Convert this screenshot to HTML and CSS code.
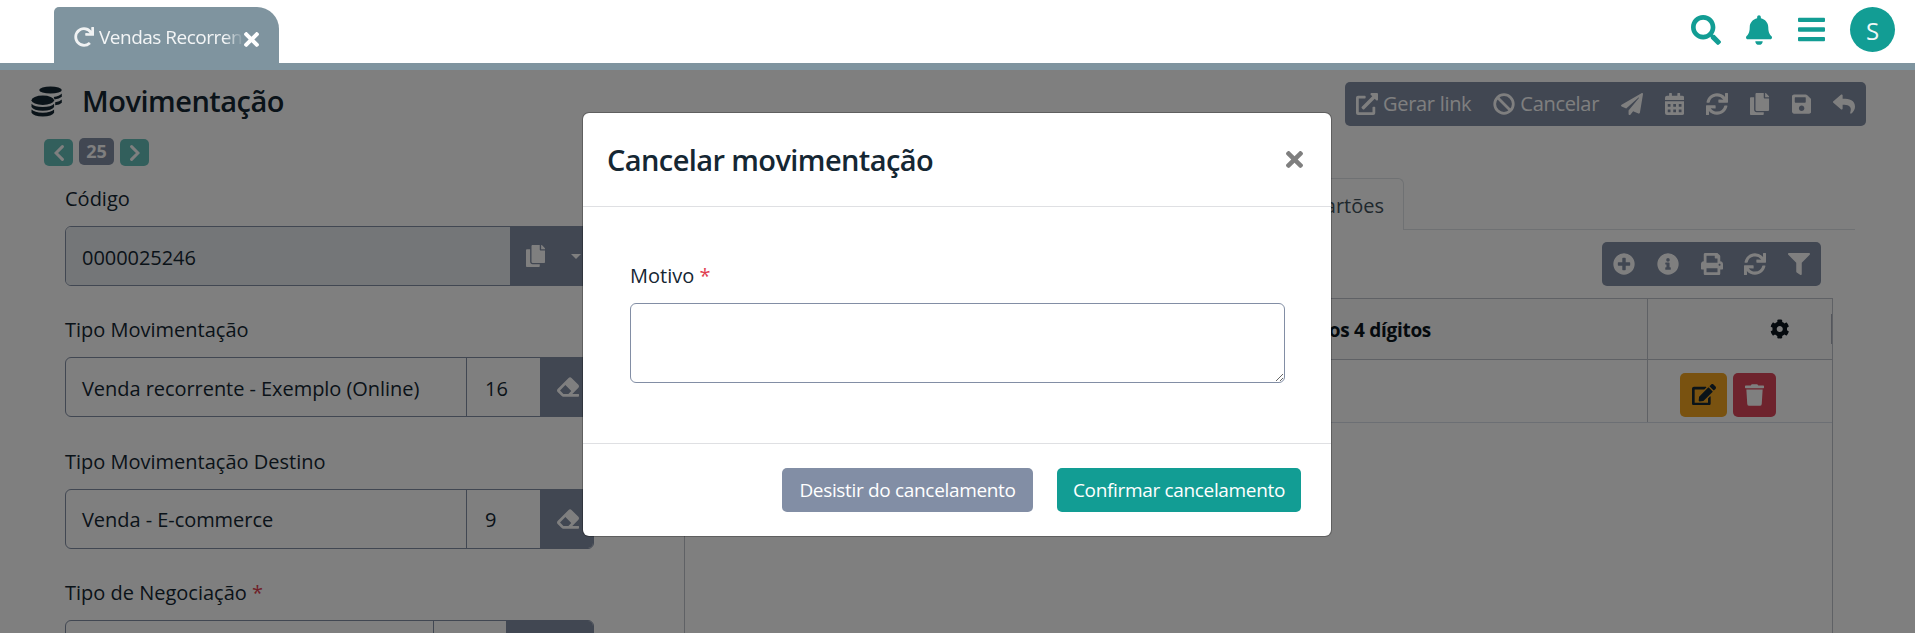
FILE: index.html
```html
<!DOCTYPE html>
<html lang="pt-BR">
<head>
<meta charset="utf-8">
<title>Movimentação</title>
<link rel="stylesheet" href="styles.css">
</head>
<body>
<svg class="sprite" aria-hidden="true">
  <symbol id="search" viewBox="0 0 512 512"><path d="M505 442.7L405.3 343c-4.500-4.500-10.600-7-17-7H372c27.600-35.300 44-79.700 44-128C416 93.100 322.900 0 208 0S0 93.100 0 208s93.100 208 208 208c48.300 0 92.700-16.400 128-44v16.300c0 6.400 2.500 12.500 7 17l99.700 99.700c9.400 9.400 24.600 9.400 33.900 0l28.300-28.300c9.400-9.400 9.400-24.600.1-34zM208 336c-70.700 0-128-57.200-128-128 0-70.700 57.200-128 128-128 70.700 0 128 57.200 128 128 0 70.700-57.200 128-128 128z"/></symbol>
  <symbol id="bell" viewBox="0 0 448 512"><path d="M224 512c35.320 0 63.970-28.650 63.970-64H160.030c0 35.350 28.650 64 63.970 64zm215.390-149.710c-19.320-20.760-55.470-51.990-55.470-154.290 0-77.700-54.480-139.900-127.940-155.160V32c0-17.670-14.320-32-31.980-32s-31.980 14.330-31.980 32v20.840C118.560 68.100 64.080 130.300 64.080 208c0 102.300-36.150 133.530-55.470 154.290-6 6.450-8.660 14.160-8.610 21.710.11 16.400 12.980 32 32.100 32h383.800c19.120 0 32-15.600 32.100-32 .05-7.550-2.610-15.270-8.610-21.710z"/></symbol>
  <symbol id="bars" viewBox="0 0 448 512"><rect y="60" width="448" height="72" rx="16"/><rect y="220" width="448" height="72" rx="16"/><rect y="380" width="448" height="72" rx="16"/></symbol>
  <symbol id="times" viewBox="0 80 352 352"><path d="M242.720 256l100.070-100.070c12.280-12.280 12.280-32.190 0-44.480l-22.240-22.240c-12.280-12.280-32.190-12.280-44.480 0L176 189.280 75.930 89.210c-12.280-12.280-32.190-12.280-44.480 0L9.210 111.450c-12.280 12.280-12.280 32.190 0 44.480L109.280 256 9.210 356.070c-12.280 12.280-12.280 32.190 0 44.480l22.240 22.240c12.280 12.280 32.200 12.280 44.480 0L176 322.720l100.070 100.070c12.280 12.280 32.200 12.280 44.480 0l22.240-22.240c12.280-12.280 12.280-32.190 0-44.480L242.720 256z"/></symbol>
  <symbol id="redo" viewBox="0 0 512 512"><path d="M500.330 0h-47.410a12 12 0 0 0-12 12.570l4 82.760A247.420 247.420 0 0 0 256 8C119.340 8 7.900 119.530 8 256.190 8.100 393.070 119.100 504 256 504a247.100 247.100 0 0 0 166.180-63.910 12 12 0 0 0 .48-17.430l-34-34a12 12 0 0 0-16.380-.55A176 176 0 1 1 402.100 157.800l-101.530-4.870a12 12 0 0 0-12.570 12v47.410a12 12 0 0 0 12 12h200.330a12 12 0 0 0 12-12V12a12 12 0 0 0-12-12z"/></symbol>
  <symbol id="coins" viewBox="0 0 31 31"><ellipse cx="19.500" cy="4" rx="11.300" ry="3.600"/><path d="M30.800 7.500v3.200q-2.300 2.200-7.300 2.700l-.8-2.300q5.600-.7 8.100-3.600zM30.800 13.500v3.200q-2 2-6.600 2.600v-3q4.600-.7 6.600-2.800z"/><ellipse cx="11.800" cy="14.300" rx="11.300" ry="4.700"/><path d="M.5 17.800q3 3.300 11.300 3.300t11.300-3.300v3.200q-2 3.700-11.300 3.700T.5 21zM.5 23.600q3 3.100 11.300 3.100t11.300-3.100v3.100q-2 3.700-11.300 3.700T.5 26.700z"/></symbol>
  <symbol id="left" viewBox="0 0 10 16"><path d="M8.400 1.600L2 8l6.400 6.400" class="stroke"/></symbol>
  <symbol id="right" viewBox="0 0 10 16"><path d="M1.600 1.600L8 8l-6.400 6.400" class="stroke"/></symbol>
  <symbol id="external" viewBox="0 0 512 512"><path d="M432 320h-32a16 16 0 0 0-16 16v112H64V128h144a16 16 0 0 0 16-16V80a16 16 0 0 0-16-16H48a48 48 0 0 0-48 48v352a48 48 0 0 0 48 48h352a48 48 0 0 0 48-48V336a16 16 0 0 0-16-16zM488 0h-128c-21.370 0-32.050 25.910-17 41l35.730 35.730L135 320.370a24 24 0 0 0 0 34L157.670 377a24 24 0 0 0 34 0l243.610-243.680L471 169c15 15 41 4.500 41-17V24a24 24 0 0 0-24-24z"/></symbol>
  <symbol id="ban" viewBox="0 0 512 512"><g fill="none" stroke="currentColor" stroke-width="64"><circle cx="256" cy="256" r="216"/><path d="M105 105l302 302"/></g></symbol>
  <symbol id="plane" viewBox="0 0 512 512"><path d="M476 3.200L12.500 270.600c-18.100 10.400-15.800 35.600 2.200 43.200L121 358.400l287.300-253.200c5.500-4.900 13.300 2.600 8.600 8.300L176 407v80.500c0 23.600 28.500 32.900 42.500 15.800L282 426l124.600 52.200c14.200 6 30.400-2.900 33-18.200l72-432C515 7.800 493.300-6.800 476 3.200z"/></symbol>
  <symbol id="calendar" viewBox="0 0 448 512"><path fill-rule="evenodd" d="M0 160v-48q0-48 48-48h48V12q0-12 12-12h40q12 0 12 12v52h128V12q0-12 12-12h40q12 0 12 12v52h48q48 0 48 48v48zM0 192h448v272q0 48-48 48H48q-48 0-48-48zM64 256v64h64v-64zM192 256v64h64v-64zM320 256v64h64v-64zM64 384v64h64v-64zM192 384v64h64v-64zM320 384v64h64v-64z"/></symbol>
  <symbol id="sync" viewBox="0 0 512 512"><path d="M440.650 12.570l4 82.770A247.160 247.160 0 0 0 255.830 8C134.730 8 33.910 94.920 12.290 209.820A12 12 0 0 0 24.090 224h49.050a12 12 0 0 0 11.670-9.260 175.910 175.910 0 0 1 317-56.940l-101.460-4.860a12 12 0 0 0-12.570 12v47.410a12 12 0 0 0 12 12H500a12 12 0 0 0 12-12V12a12 12 0 0 0-12-12h-47.370a12 12 0 0 0-11.980 12.570zM255.830 432a175.610 175.610 0 0 1-146-77.800l101.800 4.870a12 12 0 0 0 12.570-12v-47.400a12 12 0 0 0-12-12H12a12 12 0 0 0-12 12V500a12 12 0 0 0 12 12h47.350a12 12 0 0 0 12-12.600l-4.150-82.570A247.170 247.170 0 0 0 255.830 504c121.110 0 221.930-86.920 243.550-201.820a12 12 0 0 0-11.800-14.180h-49.050a12 12 0 0 0-11.670 9.260A175.860 175.860 0 0 1 255.830 432z"/></symbol>
  <symbol id="copy" viewBox="0 0 448 512"><path d="M320 448v40c0 13.255-10.745 24-24 24H24c-13.255 0-24-10.745-24-24V120c0-13.255 10.745-24 24-24h72v296c0 30.879 25.121 56 56 56h168zm0-344V0H152c-13.255 0-24 10.745-24 24v368c0 13.255 10.745 24 24 24h272c13.255 0 24-10.745 24-24V128H344c-13.200 0-24-10.800-24-24zm120.971-31.029L375.029 7.029A24 24 0 0 0 358.059 0H352v96h96v-6.059a24 24 0 0 0-7.029-16.970z"/></symbol>
  <symbol id="save" viewBox="0 0 448 512"><path d="M433.941 129.941l-83.882-83.882A48 48 0 0 0 316.118 32H48C21.490 32 0 53.490 0 80v352c0 26.510 21.490 48 48 48h352c26.510 0 48-21.490 48-48V163.882a48 48 0 0 0-14.059-33.941zM224 416c-35.346 0-64-28.654-64-64 0-35.346 28.654-64 64-64s64 28.654 64 64c0 35.346-28.654 64-64 64zm96-304.520V212c0 6.627-5.373 12-12 12H76c-6.627 0-12-5.373-12-12V108c0-6.627 5.373-12 12-12h228.520c3.183 0 6.235 1.264 8.485 3.515l3.480 3.480A11.996 11.996 0 0 1 320 111.480z"/></symbol>
  <symbol id="reply" viewBox="0 0 512 512"><path d="M8.309 189.836L184.313 37.851C199.719 24.546 224 35.347 224 56.015v80.053c160.629 1.839 288 34.032 288 186.258 0 61.441-39.581 122.309-83.333 154.132-13.653 9.931-33.111-2.533-28.077-18.631 45.344-145.012-21.507-183.510-176.590-185.742V360c0 20.700-24.300 31.453-39.687 18.164l-176.004-152c-11.071-9.562-11.086-26.753 0-36.328z"/></symbol>
  <symbol id="plus" viewBox="0 0 512 512"><path fill-rule="evenodd" d="M8 256a248 248 0 1 0 496 0a248 248 0 1 0-496 0zM216 126q0-14 14-14h52q14 0 14 14v90h90q14 0 14 14v52q0 14-14 14h-90v90q0 14-14 14h-52q-14 0-14-14v-90h-90q-14 0-14-14v-52q0-14 14-14h90z"/></symbol>
  <symbol id="info" viewBox="0 0 512 512"><path fill-rule="evenodd" d="M8 256a248 248 0 1 0 496 0a248 248 0 1 0-496 0zM214 160a42 42 0 1 0 84 0a42 42 0 1 0-84 0zM192 232q0-12 12-12h76q12 0 12 12v100h16q12 0 12 12v36q0 12-12 12H204q-12 0-12-12v-36q0-12 12-12h16v-64h-16q-12 0-12-12z"/></symbol>
  <symbol id="print" viewBox="0 0 512 512"><path d="M448 192V77.250c0-8.490-3.370-16.620-9.370-22.630L393.370 9.370c-6-6-14.140-9.370-22.630-9.370H96C78.330 0 64 14.330 64 32v160c-35.350 0-64 28.650-64 64v112c0 8.840 7.160 16 16 16h48v96c0 17.670 14.330 32 32 32h320c17.670 0 32-14.330 32-32v-96h48c8.840 0 16-7.160 16-16V256c0-35.350-28.650-64-64-64zm-64 256H128v-96h256v96zm0-224H128V64h192v48c0 8.840 7.160 16 16 16h48v96zm48 72c-13.250 0-24-10.750-24-24 0-13.260 10.750-24 24-24s24 10.740 24 24c0 13.250-10.750 24-24 24z"/></symbol>
  <symbol id="filter" viewBox="0 0 512 512"><path d="M487.976 0H24.028C2.710 0-8.047 25.866 7.058 40.971L192 225.941V432c0 7.831 3.821 15.170 10.237 19.662l80 55.980C298.020 518.690 320 507.493 320 487.980V225.941l184.947-184.970C520.021 25.896 509.338 0 487.976 0z"/></symbol>
  <symbol id="cog" viewBox="0 0 512 512"><path d="M487.400 315.700l-42.600-24.600c4.300-23.200 4.300-47 0-70.200l42.600-24.600c4.900-2.800 7.100-8.600 5.500-14-11.100-35.600-30-67.800-54.700-94.600-3.800-4.100-10-5.100-14.800-2.300L380.800 110c-17.900-15.400-38.500-27.300-60.800-35.100V25.800c0-5.600-3.900-10.500-9.400-11.700-36.700-8.200-74.300-7.800-109.200 0-5.500 1.200-9.400 6.100-9.400 11.700V75c-22.200 7.900-42.800 19.800-60.800 35.100L88.700 85.500c-4.900-2.800-11-1.900-14.800 2.300-24.700 26.700-43.600 58.900-54.700 94.600-1.700 5.400.6 11.200 5.500 14L67.300 221c-4.300 23.200-4.300 47 0 70.200l-42.600 24.600c-4.900 2.800-7.100 8.600-5.500 14 11.100 35.600 30 67.800 54.700 94.600 3.800 4.100 10 5.100 14.800 2.300l42.600-24.600c17.900 15.400 38.500 27.300 60.800 35.100v49.200c0 5.600 3.900 10.500 9.400 11.700 36.700 8.200 74.300 7.800 109.200 0 5.500-1.200 9.400-6.100 9.400-11.700v-49.200c22.200-7.900 42.800-19.800 60.800-35.100l42.600 24.600c4.900 2.800 11 1.900 14.800-2.300 24.700-26.700 43.600-58.900 54.700-94.600 1.500-5.500-.7-11.300-5.600-14.100zM256 336c-44.100 0-80-35.900-80-80s35.900-80 80-80 80 35.900 80 80-35.900 80-80 80z"/></symbol>
  <symbol id="edit" viewBox="0 0 576 512"><path d="M402.600 83.200l90.200 90.200c3.800 3.800 3.800 10 0 13.800L274.400 405.600l-92.800 10.300c-12.400 1.400-22.900-9.100-21.500-21.500l10.300-92.800L388.800 83.200c3.800-3.800 10-3.800 13.800 0zm162-22.900l-48.800-48.800c-15.200-15.200-39.900-15.200-55.200 0l-35.400 35.400c-3.800 3.800-3.800 10 0 13.800l90.200 90.200c3.800 3.800 10 3.800 13.800 0l35.400-35.400c15.200-15.300 15.200-40 0-55.200zM384 346.200V448H64V128h229.800c3.200 0 6.200-1.300 8.500-3.500l40-40c7.600-7.600 2.200-20.500-8.500-20.500H48C21.500 64 0 85.500 0 112v352c0 26.500 21.500 48 48 48h352c26.500 0 48-21.500 48-48V306.200c0-10.700-12.900-16-20.500-8.500l-40 40c-2.200 2.300-3.500 5.300-3.500 8.500z"/></symbol>
  <symbol id="trash" viewBox="0 0 448 512"><path d="M432 32H312l-9.400-18.700A24 24 0 0 0 281.100 0H166.800a23.720 23.720 0 0 0-21.400 13.300L136 32H16A16 16 0 0 0 0 48v32a16 16 0 0 0 16 16h416a16 16 0 0 0 16-16V48a16 16 0 0 0-16-16zM53.200 467a48 48 0 0 0 47.900 45h245.800a48 48 0 0 0 47.900-45L416 128H32z"/></symbol>
  <symbol id="eraser" viewBox="0 0 512 512"><path d="M497.941 273.941c18.745-18.745 18.745-49.137 0-67.882l-160-160c-18.745-18.745-49.136-18.746-67.883 0l-256 256c-18.745 18.745-18.745 49.137 0 67.882l96 96A48.004 48.004 0 0 0 144 480h356c6.627 0 12-5.373 12-12v-40c0-6.627-5.373-12-12-12H355.883l142.058-142.059zm-302.627-62.627l137.373 137.373L265.373 416H150.628l-80-80 124.686-124.686z"/></symbol>
</svg>

<header class="topbar">
  <div class="apptab">
    <svg class="redo"><use href="#redo"/></svg>
    <span class="apptab-title">Vendas Recorren</span>
    <svg class="apptab-close"><use href="#times"/></svg>
  </div>
  <nav class="topnav">
    <svg class="i-search"><use href="#search"/></svg>
    <svg class="i-bell"><use href="#bell"/></svg>
    <svg class="i-bars"><use href="#bars"/></svg>
    <span class="avatar">S</span>
  </nav>
</header>

<main class="page">
  <section class="form">
    <h1 class="title"><svg class="coins"><use href="#coins"/></svg><span>Movimentação</span></h1>
    <div class="pager">
      <button class="page-btn"><svg><use href="#left"/></svg></button>
      <span class="page-num">25</span>
      <button class="page-btn"><svg><use href="#right"/></svg></button>
    </div>
    <div class="field">
      <label>Código</label>
      <div class="group">
        <div class="input disabled">0000025246</div>
        <div class="addon addon-copy"><svg class="ic n"><use href="#copy"/></svg><i class="caret"></i></div>
      </div>
    </div>
    <div class="field">
      <label>Tipo Movimentação</label>
      <div class="group">
        <div class="input">Venda recorrente - Exemplo (Online)</div>
        <div class="input id">16</div>
        <div class="addon"><svg class="ic"><use href="#eraser"/></svg></div>
      </div>
    </div>
    <div class="field">
      <label>Tipo Movimentação Destino</label>
      <div class="group">
        <div class="input">Venda - E-commerce</div>
        <div class="input id">9</div>
        <div class="addon"><svg class="ic"><use href="#eraser"/></svg></div>
      </div>
    </div>
    <div class="field">
      <label>Tipo de Negociação <b class="req">*</b></label>
      <div class="group">
        <div class="input"></div>
        <div class="input id id-neg"></div>
        <div class="addon addon-neg"></div>
      </div>
    </div>
  </section>

  <section class="detail">
    <div class="toolbar">
      <span class="tool"><svg class="ic"><use href="#external"/></svg><span>Gerar link</span></span>
      <span class="tool"><svg class="ic"><use href="#ban"/></svg><span>Cancelar</span></span>
      <svg class="ic"><use href="#plane"/></svg>
      <svg class="ic n"><use href="#calendar"/></svg>
      <svg class="ic"><use href="#sync"/></svg>
      <svg class="ic n"><use href="#copy"/></svg>
      <svg class="ic n"><use href="#save"/></svg>
      <svg class="ic"><use href="#reply"/></svg>
    </div>
    <div class="tabs"><div class="tab"><span>Cartões</span></div><div class="tabs-line"></div></div>
    <div class="toolbar toolbar-grid">
      <svg class="ic"><use href="#plus"/></svg>
      <svg class="ic"><use href="#info"/></svg>
      <svg class="ic"><use href="#print"/></svg>
      <svg class="ic"><use href="#sync"/></svg>
      <svg class="ic"><use href="#filter"/></svg>
    </div>
    <div class="grid">
      <div class="row head">
        <div class="cell"><span class="digits">Últimos 4 dígitos</span></div>
        <div class="cell cell-cog"><svg class="cog"><use href="#cog"/></svg><i class="resize"></i></div>
      </div>
      <div class="row">
        <div class="cell"></div>
        <div class="cell cell-actions">
          <button class="act edit"><svg><use href="#edit"/></svg></button>
          <button class="act trash"><svg><use href="#trash"/></svg></button>
        </div>
      </div>
    </div>
  </section>

  <div class="backdrop">
    <div class="modal">
      <div class="modal-head"><h2>Cancelar movimentação</h2><svg class="close"><use href="#times"/></svg></div>
      <div class="modal-body">
        <label>Motivo <b class="req">*</b></label>
        <textarea></textarea>
      </div>
      <div class="modal-foot">
        <button class="btn gray"><span>Desistir do cancelamento</span></button>
        <button class="btn teal"><span>Confirmar cancelamento</span></button>
      </div>
    </div>
  </div>
</main>
</body>
</html>
```

FILE: styles.css
```css
* { box-sizing: border-box; }
body {
  margin: 0;
  height: 633px;
  overflow: hidden;
  display: flex;
  flex-direction: column;
  font: 20px/30px "Segoe UI", "Open Sans", "Noto Sans", sans-serif;
  letter-spacing: 0;
  color: #152733;
  background: #fff;
}
.sprite { display: none; }
svg { fill: currentColor; display: block; flex: none; }
button { border: 0; padding: 0; font: inherit; letter-spacing: inherit; display: flex; align-items: center; justify-content: center; }
span, label { white-space: nowrap; }
.stroke { fill: none; stroke: currentColor; stroke-width: 3; stroke-linecap: round; }

.topbar {
  flex: none;
  height: 70px;
  padding: 7px 20px 0 54px;
  display: flex;
  justify-content: space-between;
  border-bottom: 7px solid #7f949f;
}
.apptab {
  width: 225px;
  height: 56px;
  padding: 0 20px;
  display: flex;
  align-items: center;
  color: #fff;
  background: #7f949f;
  border-radius: 5px 22px 0 0;
}
.redo { width: 20px; height: 20px; margin: 3px 5px 0 0; color: #f0f2f3; }
.apptab-title {
  width: 143px;
  margin-top: 4px;
  font-size: 19px;
  color: #f3f5f6;
  letter-spacing: -0.5px;
  -webkit-mask-image: linear-gradient(to right, #000 88%, rgba(0, 0, 0, .1) 100%);
  mask-image: linear-gradient(to right, #000 88%, rgba(0, 0, 0, .1) 100%);
}
.apptab-close { width: 15px; height: 15px; margin: 9px 0 0 2px; }
.topnav { display: flex; height: 45px; align-items: center; color: #129d94; }
.i-search { width: 30px; height: 30px; margin-right: 25px; }
.i-bell { width: 26px; height: 30px; margin-right: 26px; }
.i-bars { width: 27px; height: 31px; margin-right: 25px; }
.avatar {
  width: 45px; height: 45px; line-height: 47px;
  border-radius: 50%;
  text-align: center;
  font-size: 24px;
  color: #eef8f7;
  background: #129d94;
}

.page { flex: 1; position: relative; display: flex; overflow: hidden; }
.form { width: 684px; flex: none; padding: 11px 0 0 31px; }
.title { margin: 0; height: 40px; display: flex; align-items: center; font-size: 29px; font-weight: 600; line-height: 40px; letter-spacing: -0.5px; }
.coins { width: 31px; height: 31px; margin-right: 20px; }
.pager { display: flex; gap: 6px; margin: 17px 0 0 13px; height: 28px; }
.page-btn { width: 29px; height: 27px; margin-top: 1px; border-radius: 5px; color: #fff; background: #129d94; opacity: .65; }
.page-btn svg { width: 10px; height: 16px; }
.page-num { width: 35px; height: 27px; line-height: 27px; border-radius: 5px; text-align: center; font-weight: 700; font-size: 18px; color: #fff; background: #828ea5; }
.field { margin: 0 0 0 34px; width: 529px; height: 131.330px; }
.pager + .field { margin-top: 17px; }
.field label { display: block; height: 43px; padding-top: 1px; line-height: 30px; }
.group { display: flex; height: 60px; border: 1px solid #828ea5; border-radius: 6px; overflow: hidden; }
.input { flex: 1; padding: 3px 0 0 16px; display: flex; align-items: center; white-space: nowrap; letter-spacing: -0.05px; }
.input.disabled { background: #e9edf0; }
.input.id { flex: none; width: 74px; padding-left: 18px; border-left: 1px solid #828ea5; }
.input.id-neg { width: 73px; }
.addon { width: 53px; display: flex; align-items: center; padding-left: 17px; color: #fff; background: #828ea5; }
.addon-copy { width: 83px; padding-left: 16px; gap: 26px; }
.addon-neg { width: 87px; }
.addon-copy .ic { margin-top: -1px; }
.caret { border: 5px solid transparent; border-top-color: #fff; border-bottom: 0; }
.ic { width: 22px; height: 22px; }
.ic.n { width: 19.250px; }
.req { font-weight: 400; color: #e03e50; }

.detail { flex: 1; display: flex; flex-direction: column; padding-top: 12px; }
.toolbar {
  align-self: flex-end;
  margin-right: 49px;
  width: 521px;
  height: 44px;
  padding: 0 11px;
  display: flex;
  align-items: center;
  justify-content: space-between;
  border-radius: 5px;
  color: #fff;
  background: #828ea5;
}
.tool { display: flex; align-items: center; gap: 5px; letter-spacing: -0.3px; }
.tabs { display: flex; margin-top: 52px; height: 52px; }
.tab { width: 720px; padding: 12px 19px 0 0; text-align: right; border: 1px solid #dee2e6; border-bottom: 0; border-left: 0; border-radius: 0 6px 0 0; color: #40505a; }
.tabs-line { width: 451px; border-bottom: 1px solid #dee2e6; }
.toolbar-grid { width: 219px; margin: 12px 94px 0 0; }
.grid { flex: 1; width: 1149px; margin-top: 12px; border: 1px solid #bfc2cb; border-bottom: 0; }
.row { display: flex; height: 63px; border-bottom: 1px solid #d9dee8; }
.row.head { height: 61px; background: #fbfbfb; border-bottom-color: #bfc2cb; color: #0a141c; }
.cell { flex: 1; display: flex; align-items: center; justify-content: flex-end; padding-right: 216px; }
.cell-cog, .cell-actions { flex: none; width: 185px; padding: 0 0 0 122px; border-left: 1px solid #bfc2cb; }
.cell-cog { justify-content: space-between; }
.resize { width: 1px; height: 30px; background: #a8adb8; }
.cog { width: 19.500px; height: 20px; margin-top: -1px; }
.cell-actions { justify-content: flex-start; padding-left: 32px; gap: 6px; }
.act { height: 44px; margin-top: 7px; border-radius: 5px; }
.edit { width: 47px; background: #f2a521; color: #152733; }
.edit svg { width: 24px; height: 21.500px; }
.trash { width: 43px; background: #dc465a; color: #fff; }
.trash svg { width: 19px; height: 22px; }
.digits { margin-top: 2px; font-weight: 700; font-size: 19px; letter-spacing: -0.3px; }

.backdrop { position: absolute; inset: 0; padding-top: 42px; background: rgba(0, 0, 0, .5); }
.modal {
  width: 750px;
  height: 425px;
  margin-left: 582px;
  border: 1px solid rgba(0, 0, 0, .25);
  border-radius: 7px;
  background: #fff;
  background-clip: padding-box;
  display: flex;
  flex-direction: column;
}
.modal-head { height: 94px; padding: 0 28px 0 24px; display: flex; align-items: center; justify-content: space-between; border-bottom: 1px solid #dfe0e3; }
h2 { margin: 0; font-size: 29px; font-weight: 600; line-height: 40px; letter-spacing: -0.6px; }
.close { width: 17px; height: 17px; color: #7f7f7f; }
.modal-body { flex: 1; padding: 54px 46px 0 47px; }
.modal-body label { display: block; height: 42px; }
textarea { display: block; width: 655px; height: 80px; border: 1px solid #828ea5; border-radius: 6px; background: #fff; }
.modal-foot { height: 93px; padding-right: 30px; display: flex; justify-content: flex-end; align-items: center; gap: 24px; border-top: 1px solid #dfe0e3; }
.btn { height: 44px; border-radius: 5px; color: #fff; font-size: 19px; letter-spacing: -0.33px; }
.gray { width: 251px; background: #828ea5; }
.teal { width: 244px; background: #129d94; }
```
